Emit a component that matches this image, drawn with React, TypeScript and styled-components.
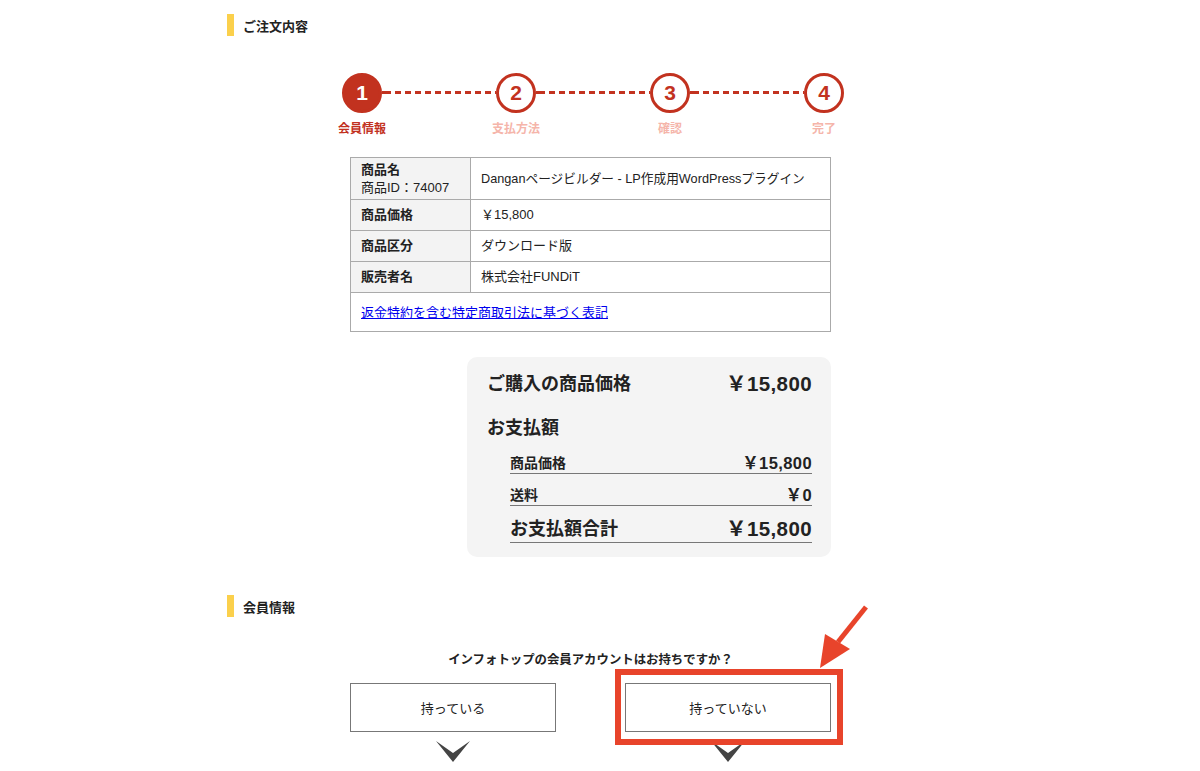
import React from "react";
import styled, { createGlobalStyle } from "styled-components";

const RED = "#c2321f";
const PALE = "#f5b5aa";
const MARK = "#e8442b";

const GlobalStyle = createGlobalStyle`
  html, body {
    margin: 0;
    padding: 0;
    background: #fff;
  }
  body {
    font-family: "Liberation Sans", "Noto Sans CJK JP", sans-serif;
    color: #222;
  }
`;

const Page = styled.div`
  width: 727px;
  margin-left: 227px;
  padding-top: 14px;
  padding-bottom: 40px;
`;

const SectionTitle = styled.h2<{ gap?: number }>`
  display: flex;
  align-items: center;
  height: 22px;
  margin: ${(p) => p.gap ?? 0}px 0 0;
  padding-left: 9px;
  border-left: 7px solid #fbd04c;
  font-size: 13px;
  font-weight: bold;
`;

const Steps = styled.div`
  display: flex;
  margin: 37px 0 0 115px;
`;

const Step = styled.div`
  display: flex;
  flex-direction: column;
  align-items: center;
  width: 40px;
`;

const Circle = styled.div<{ active?: boolean }>`
  box-sizing: border-box;
  width: 40px;
  height: 40px;
  border-radius: 50%;
  border: 3px solid ${RED};
  background: ${(p) => (p.active ? RED : "#fff")};
  color: ${(p) => (p.active ? "#fff" : RED)};
  display: flex;
  align-items: center;
  justify-content: center;
  font-size: 21px;
  font-weight: bold;
`;

const StepLabel = styled.div<{ active?: boolean }>`
  margin-top: 9px;
  white-space: nowrap;
  font-size: 12px;
  line-height: 14px;
  font-weight: bold;
  color: ${(p) => (p.active ? RED : PALE)};
`;

const Connector = styled.div`
  width: 114px;
  height: 3px;
  margin-top: 18px;
  background: repeating-linear-gradient(
    to right,
    ${RED} 0 6px,
    transparent 6px 10px
  );
  background-position: 3px 0;
`;

const Order = styled.div`
  width: 481px;
  margin: 21px auto 0;
  display: flex;
  flex-direction: column;
`;

const Table = styled.table`
  width: 100%;
  border-collapse: collapse;
  font-size: 13px;
  line-height: 18px;
`;

const Row = styled.tr<{ h: number }>`
  height: ${(p) => p.h}px;
`;

const Head = styled.th`
  width: 99px;
  padding: 0 10px;
  text-align: left;
  vertical-align: middle;
  background: #f3f3f3;
  border: 1px solid #aaa;
  font-weight: bold;
`;

const SubId = styled.span`
  display: block;
  font-weight: normal;
`;

const Cell = styled.td<{ wide?: boolean }>`
  padding: 0 10px;
  border: 1px solid #aaa;
  vertical-align: middle;
  ${(p) => (p.wide ? "padding-top: 2px;" : "")}
`;

const Title = styled.span`
  font-size: 12.7px;
`;

const LawLink = styled.a`
  color: #0000ee;
  text-decoration: underline;
`;

const Summary = styled.div`
  align-self: flex-end;
  width: 364px;
  margin-top: 25px;
  box-sizing: border-box;
  padding: 14px 19px 14px 20px;
  background: #f4f4f4;
  border-radius: 10px;
`;

const TotalLine = styled.div<{ gap?: number }>`
  display: flex;
  justify-content: space-between;
  align-items: center;
  height: 26px;
  margin-top: ${(p) => p.gap ?? 0}px;
  font-size: 18px;
  line-height: 26px;
  font-weight: bold;
`;

const Amount = styled.span<{ big?: boolean }>`
  font-size: ${(p) => (p.big ? 20.5 : 16.5)}px;
  line-height: ${(p) => (p.big ? 26 : 20)}px;
  letter-spacing: 0.4px;
`;

const Breakdown = styled.div`
  margin: 1px 0 0 23px;
`;

const BreakLine = styled.div<{ total?: boolean }>`
  display: flex;
  justify-content: space-between;
  align-items: center;
  height: ${(p) => (p.total ? 26 : 20)}px;
  padding-top: ${(p) => (p.total ? 10 : 11)}px;
  border-bottom: 1px solid #777;
  font-weight: bold;
  font-size: ${(p) => (p.total ? 18 : 14)}px;
  line-height: ${(p) => (p.total ? 26 : 20)}px;
`;

const Question = styled.p`
  margin: 34px 0 0;
  text-align: center;
  font-size: 12.4px;
  line-height: 18px;
  font-weight: bold;
`;

const Choices = styled.div`
  display: flex;
  justify-content: center;
  gap: 69px;
  margin-top: 14px;
`;

const Choice = styled.div`
  display: flex;
  flex-direction: column;
  align-items: center;
`;

const Frame = styled.div<{ marked?: boolean }>`
  position: relative;
  &::after {
    content: "";
    display: ${(p) => (p.marked ? "block" : "none")};
    position: absolute;
    top: -14px;
    left: -10px;
    right: -12px;
    bottom: -13px;
    border: 6px solid ${MARK};
    pointer-events: none;
    z-index: 2;
  }
`;

const ChoiceButton = styled.button`
  box-sizing: border-box;
  width: 206px;
  height: 49px;
  background: #fff;
  border: 1px solid #777;
  font-family: inherit;
  font-size: 13px;
  color: #222;
  cursor: pointer;
`;

const Pointer = styled.svg`
  position: absolute;
  left: 193px;
  top: -83px;
  overflow: visible;
  z-index: 3;
`;

const Chevron = styled.svg`
  margin-top: 9px;
  display: block;
`;

const Down = () => (
  <Chevron width="34" height="21" viewBox="0 0 34 21">
    <polygon points="0,0 17,12 34,0 17,21" fill="#444" />
  </Chevron>
);

const steps = [
  { n: 1, label: "会員情報" },
  { n: 2, label: "支払方法" },
  { n: 3, label: "確認" },
  { n: 4, label: "完了" },
];

export default function App() {
  return (
    <>
      <GlobalStyle />
      <Page>
        <SectionTitle>ご注文内容</SectionTitle>

        <Steps>
          {steps.map((s, i) => (
            <React.Fragment key={s.n}>
              {i > 0 && <Connector />}
              <Step>
                <Circle active={i === 0}>{s.n}</Circle>
                <StepLabel active={i === 0}>{s.label}</StepLabel>
              </Step>
            </React.Fragment>
          ))}
        </Steps>

        <Order>
          <Table>
            <tbody>
              <Row h={42}>
                <Head>
                  商品名
                  <SubId>商品ID：74007</SubId>
                </Head>
                <Cell>
                  <Title>Danganページビルダー - LP作成用WordPressプラグイン</Title>
                </Cell>
              </Row>
              <Row h={31}>
                <Head>商品価格</Head>
                <Cell>￥15,800</Cell>
              </Row>
              <Row h={31}>
                <Head>商品区分</Head>
                <Cell>ダウンロード版</Cell>
              </Row>
              <Row h={31}>
                <Head>販売者名</Head>
                <Cell>株式会社FUNDiT</Cell>
              </Row>
              <Row h={39}>
                <Cell colSpan={2} wide>
                  <LawLink href="#">返金特約を含む特定商取引法に基づく表記</LawLink>
                </Cell>
              </Row>
            </tbody>
          </Table>

          <Summary>
            <TotalLine>
              <span>ご購入の商品価格</span>
              <Amount big>￥15,800</Amount>
            </TotalLine>
            <TotalLine gap={18}>お支払額</TotalLine>
            <Breakdown>
              <BreakLine>
                <span>商品価格</span>
                <Amount>￥15,800</Amount>
              </BreakLine>
              <BreakLine>
                <span>送料</span>
                <Amount>￥0</Amount>
              </BreakLine>
              <BreakLine total>
                <span>お支払額合計</span>
                <Amount big>￥15,800</Amount>
              </BreakLine>
            </Breakdown>
          </Summary>
        </Order>

        <SectionTitle gap={38}>会員情報</SectionTitle>
        <Question>インフォトップの会員アカウントはお持ちですか？</Question>

        <Choices>
          <Choice>
            <Frame>
              <ChoiceButton>持っている</ChoiceButton>
            </Frame>
            <Down />
          </Choice>
          <Choice>
            <Frame marked>
              <ChoiceButton>持っていない</ChoiceButton>
              <Pointer width="52" height="70" viewBox="0 0 52 70">
                <line x1="48" y1="7" x2="20" y2="42" stroke={MARK} strokeWidth="5" />
                <polygon points="2,68 7,34 32,49" fill={MARK} />
              </Pointer>
            </Frame>
            <Down />
          </Choice>
        </Choices>
      </Page>
    </>
  );
}
